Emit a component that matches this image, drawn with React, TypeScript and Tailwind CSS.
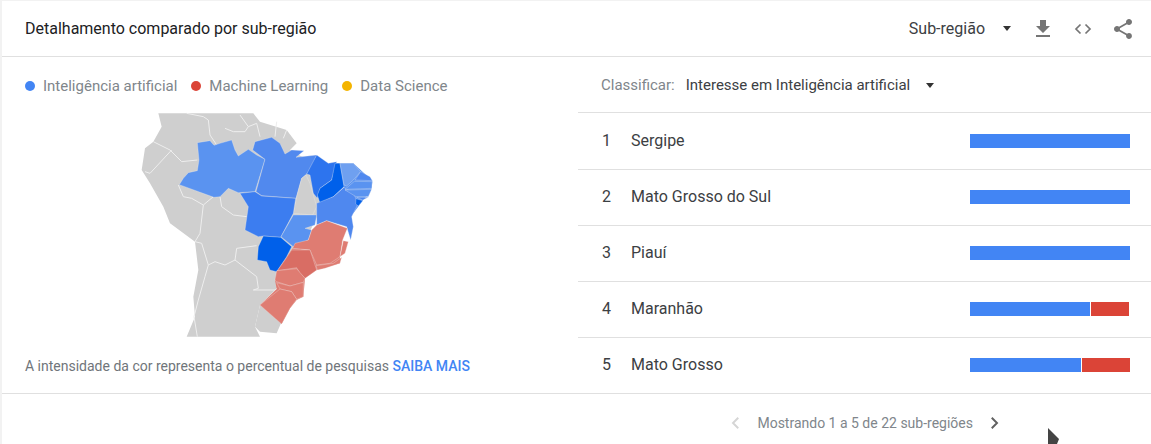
import React from "react";

const rows = [
  { rank: 1, name: "Sergipe", blue: 160, red: 0 },
  { rank: 2, name: "Mato Grosso do Sul", blue: 160, red: 0 },
  { rank: 3, name: "Piauí", blue: 160, red: 0 },
  { rank: 4, name: "Maranhão", blue: 120, red: 38 },
  { rank: 5, name: "Mato Grosso", blue: 111, red: 48 },
];

const states = [
  { fill: "#5a93f0", pts: "178,254 190,235 205,218 232,212 237,180 232,128 270,122 282,136 300,130 335,120 345,150 355,168 385,148 410,165 435,178 405,275 355,278 325,265 300,290 282,292" },
  { fill: "#5189ee", pts: "435,178 398,150 405,125 455,112 480,130 495,162 515,150 552,152 528,172 590,165 575,205 560,222 545,235 528,295 425,287 408,275" },
  { fill: "#2d74ee", pts: "590,165 625,190 650,185 635,240 600,265 592,295 580,280 570,225 560,222" },
  { fill: "#0060ea", pts: "645,190 660,190 672,260 640,290 600,310 592,285 600,265 635,240" },
  { fill: "#cfcfcf", pts: "558,225 570,250 590,320 578,345 520,340 530,290 545,235" },
  { fill: "#3c7df0", pts: "360,280 405,275 425,288 527,295 520,340 482,412 430,408 415,410 375,390 385,320" },
  { fill: "#0060ea", pts: "415,440 430,408 482,412 515,440 500,470 470,515 450,510 440,485 412,480" },
  { fill: "#5a93f0", pts: "520,345 590,345 585,375 555,385 575,390 565,420 520,440 483,410" },
  { fill: "#4f88ef", pts: "590,310 640,290 672,262 700,280 715,310 695,350 700,380 692,420 680,380 620,362 590,375" },
  { fill: "#6fa0f0", pts: "660,190 700,190 722,215 700,240 680,258 672,255" },
  { fill: "#4f88ef", pts: "722,215 750,230 757,242 705,240" },
  { fill: "#5a93f0", pts: "703,244 757,245 755,265 675,268" },
  { fill: "#5a93f0", pts: "675,270 755,268 745,290 708,290" },
  { fill: "#4f88ef", pts: "710,292 745,292 728,300" },
  { fill: "#0060ea", pts: "708,296 728,302 715,318 707,312" },
  { fill: "#df7c72", pts: "620,362 682,385 668,420 660,470 630,490 590,495 570,450 518,445 525,430 565,420 575,390 590,375" },
  { fill: "#df7c72", pts: "670,422 685,425 675,460 660,470" },
  { fill: "#df7c72", pts: "588,497 640,490 665,472 660,490 615,505 592,510" },
  { fill: "#d96d64", pts: "515,450 570,450 585,495 590,510 555,535 540,520 530,503 472,512 495,480" },
  { fill: "#df7c72", pts: "470,512 530,506 555,535 550,547 510,558 470,545 465,540" },
  { fill: "#df7c72", pts: "470,548 510,558 550,547 550,590 530,598 515,575 480,567" },
  { fill: "#df7c72", pts: "480,567 515,575 530,598 510,625 485,672 420,615" },
];

const borders = [
  "200,40 250,50 265,60 270,105 290,135",
  "100,125 150,150 185,185 232,180",
  "75,215 90,220 155,150",
  "175,255 190,290 215,295 250,315 280,290",
  "300,290 305,320 340,345 380,350",
  "250,315 240,400 225,425 245,430 265,495 285,485 315,495 345,480",
  "345,480 350,445 410,437",
  "345,480 410,530 415,565 400,570 465,570",
  "265,495 255,530 235,600 222,650 232,710",
  "315,85 340,95 375,95 385,80 360,45",
  "385,80 410,70 420,110",
  "470,65 465,110",
  "500,90 490,115",
];

function BrazilMap() {
  return (
    <svg viewBox="0 0 840 720" className="w-[280px] h-[240px] block">
      <polygon
        fill="#cfcfcf"
        points="115,40 400,40 420,65 500,90 530,130 510,150 600,200 600,330 520,500 465,570 420,615 405,680 420,710 200,710 225,650 220,590 235,510 225,425 150,370 130,320 90,250 65,210 75,145 100,125 125,80"
      />
      <polygon fill="#cfcfcf" points="420,615 485,665 470,700 420,695 405,680" />
      {borders.map((b) => (
        <polyline key={b} points={b} fill="none" stroke="#eeeeee" strokeWidth="3" />
      ))}
      {/* underlays so the coast has no gaps between the state shapes */}
      <polygon fill="#5a93f0" points="645,190 700,190 757,242 755,265 728,302 700,340 672,262" />
      <polygon fill="#df7c72" points="518,445 570,450 660,470 660,490 590,510 555,535 550,590 530,600 510,625 485,672 420,615 470,567 465,540 472,512" />
      {states.map((s) => (
        <polygon key={s.pts} points={s.pts} fill={s.fill} stroke="#f0f0f0" strokeOpacity="0.55" strokeWidth="1.6" strokeLinejoin="round" />
      ))}
    </svg>
  );
}

function Caret() {
  return <span className="block w-0 h-0 border-x-[4px] border-x-transparent border-t-[5px] border-t-[#333]" />;
}

function LegendItem({ dot, label }: { dot: string; label: string }) {
  return (
    <div className="flex items-center gap-[8px]">
      <span className={`w-[10px] h-[10px] rounded-full ${dot}`} />
      <span>{label}</span>
    </div>
  );
}

export default function App() {
  return (
    <div className="relative w-[1151px] h-[444px] overflow-hidden bg-[#f2f2f2] pl-[2px] pt-[1px] font-['Roboto',sans-serif]">
      <div className="bg-white h-[443px] flex flex-col">
        <div className="h-[56px] shrink-0 flex items-center border-b border-[#e0e0e0] pl-[23px] pr-[16px]">
          <div className="text-[16px] text-[#202124]">Detalhamento comparado por sub-região</div>
          <div className="ml-auto flex items-center text-[#5f6368]">
            <span className="text-[16px] text-[#3c4043]">Sub-região</span>
            <span className="ml-[18px]"><Caret /></span>
            <svg viewBox="0 0 24 24" className="ml-[20px] w-[24px] h-[24px]" fill="#757575">
              <path d="M19 9h-4V3H9v6H5l7 7 7-7zM5 18v2h14v-2H5z" />
            </svg>
            <svg viewBox="0 0 24 24" className="ml-[16px] w-[24px] h-[24px]" fill="none" stroke="#757575" strokeWidth="1.7">
              <path d="M9.5 7.5 5 12l4.5 4.5M14.5 7.5 19 12l-4.5 4.5" />
            </svg>
            <svg viewBox="0 0 24 24" className="ml-[16px] w-[24px] h-[24px]" fill="#757575">
              <path d="M18 16.08c-.76 0-1.44.3-1.96.77L8.91 12.7c.05-.23.09-.46.09-.7s-.04-.47-.09-.7l7.05-4.11c.54.5 1.25.81 2.04.81 1.66 0 3-1.34 3-3s-1.34-3-3-3-3 1.34-3 3c0 .24.04.47.09.7L8.04 9.81C7.5 9.31 6.79 9 6 9c-1.66 0-3 1.34-3 3s1.34 3 3 3c.79 0 1.5-.31 2.04-.81l7.12 4.16c-.05.21-.08.43-.08.65 0 1.61 1.31 2.92 2.92 2.92s2.92-1.31 2.92-2.92-1.31-2.92-2.92-2.92z" />
            </svg>
          </div>
        </div>

        <div className="flex h-[337px] shrink-0 border-b border-[#e0e0e0]">
          <div className="w-[576px] shrink-0 flex flex-col">
            <div className="h-[43px] shrink-0 pl-[23px] pt-[19px] flex items-start gap-[14px] text-[15px] leading-[20px] text-[#80868b]">
              <LegendItem dot="bg-[#4285f4]" label="Inteligência artificial" />
              <LegendItem dot="bg-[#db4437]" label="Machine Learning" />
              <LegendItem dot="bg-[#f4b400]" label="Data Science" />
            </div>
            <div className="pl-[118px]"><BrazilMap /></div>
            <div className="mt-[16px] pl-[23px] text-[14px] leading-[20px] text-[#70757a]">
              A intensidade da cor representa o percentual de pesquisas{" "}
              <span className="text-[#4285f4] font-medium">SAIBA MAIS</span>
            </div>
          </div>

          <div className="flex-1 flex flex-col">
            <div className="h-[56px] shrink-0 flex items-center border-b border-[#e0e0e0] pl-[23px] pt-[2px] text-[15px]">
              <span className="text-[#80868b]">Classificar:</span>
              <span className="ml-[11px] text-[#3c4043]">Interesse em Inteligência artificial</span>
              <span className="ml-[16px]"><Caret /></span>
            </div>
            {rows.map((r, i) => (
              <div
                key={r.rank}
                className={`shrink-0 flex items-center pl-[24px] text-[16px] text-[#3c4043] ${i === 0 ? "h-[57px]" : "h-[56px] pb-[1px]"} ${i < rows.length - 1 ? "border-b border-[#e0e0e0]" : "pb-[2px]"}`}
              >
                <span className="w-[29px]">{r.rank}</span>
                <span>{r.name}</span>
                <div className="ml-auto w-[181px] pr-[21px] flex h-[14px]">
                  <div className="bg-[#4285f4]" style={{ width: r.blue }} />
                  {r.red > 0 && <div className="ml-[1px] bg-[#db4437]" style={{ width: r.red }} />}
                </div>
              </div>
            ))}
          </div>
        </div>

        <div className="flex-1 flex items-center justify-end pr-[148px] pt-[8px] text-[14px] text-[#80868b]">
          <svg viewBox="0 0 24 24" className="w-[18px] h-[18px] mr-[12px]" fill="none" stroke="#d5d5d5" strokeWidth="2.6">
            <path d="M15 5l-7 7 7 7" />
          </svg>
          <span>Mostrando 1 a 5 de 22 sub-regiões</span>
          <svg viewBox="0 0 24 24" className="w-[18px] h-[18px] ml-[12px]" fill="none" stroke="#616161" strokeWidth="2.6">
            <path d="M9 5l7 7-7 7" />
          </svg>
        </div>
      </div>

      {/* mouse cursor caught in the screenshot */}
      <svg className="absolute left-[1046px] top-[426px] w-[16px] h-[18px]" viewBox="0 0 16 18">
        <polygon points="2,2 13,13 11,18 2,18" fill="#444" />
      </svg>
    </div>
  );
}
